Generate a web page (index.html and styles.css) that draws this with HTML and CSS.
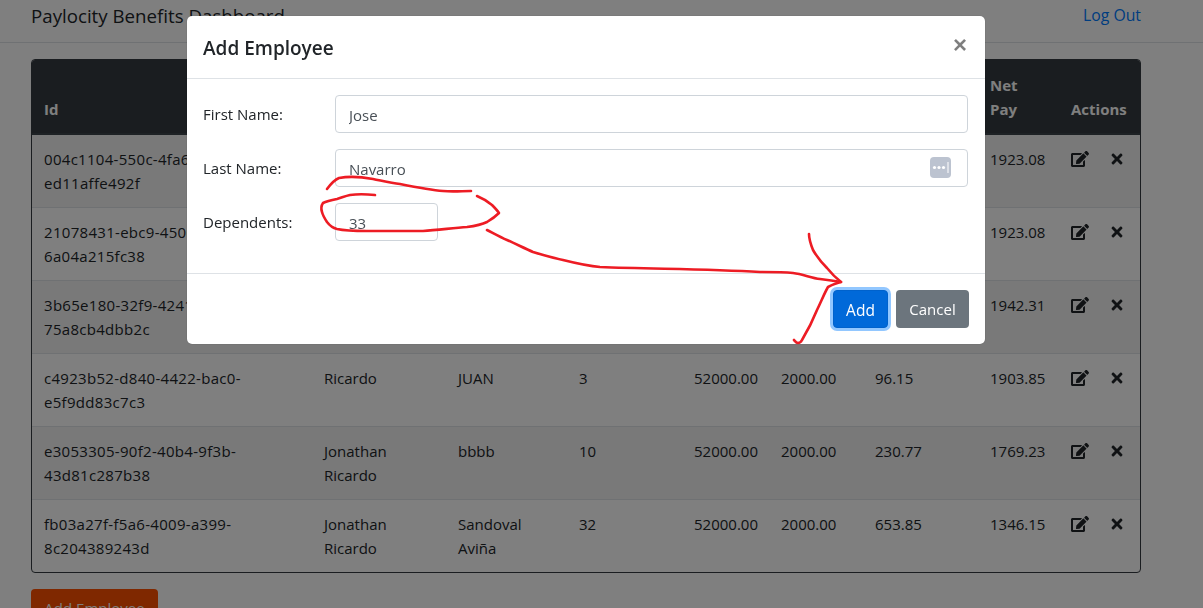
FILE: index.html
```html
<!DOCTYPE html>
<html lang="en">
<head>
    <meta charset="UTF-8">
    <meta name="viewport" content="width=device-width, initial-scale=1.0">
    <title>Paylocity Benefits Dashboard</title>
    <link rel="stylesheet" href="styles.css">
</head>
<body>
    <svg width="0" height="0" class="icon-defs">
        <symbol id="icon-edit" viewBox="0 0 576 512"><path d="M402.6 83.2l90.2 90.2c3.8 3.8 3.8 10 0 13.8L274.4 405.6l-92.8 10.3c-12.4 1.4-22.9-9.1-21.5-21.5l10.3-92.8L388.8 83.2c3.8-3.8 10-3.8 13.8 0zm162-22.9l-48.8-48.8c-15.2-15.2-39.9-15.2-55.2 0l-35.4 35.4c-3.8 3.8-3.8 10 0 13.8l90.2 90.2c3.8 3.8 10 3.8 13.8 0l35.4-35.4c15.2-15.3 15.2-40 0-55.2zM384 346.2V448H64V128h229.8c3.2 0 6.2-1.3 8.5-3.5l40-40c7.6-7.6 2.2-20.5-8.5-20.5H48C21.5 64 0 85.5 0 112v352c0 26.5 21.5 48 48 48h352c26.5 0 48-21.5 48-48V306.2c0-10.7-12.9-16-20.5-8.5l-40 40c-2.2 2.3-3.5 5.3-3.5 8.5z"/></symbol>
        <symbol id="icon-times" viewBox="0 0 352 512"><path d="M242.72 256l100.07-100.07c12.28-12.28 12.28-32.19 0-44.48l-22.24-22.24c-12.28-12.28-32.19-12.28-44.48 0L176 189.28 75.93 89.21c-12.28-12.28-32.19-12.28-44.48 0L9.21 111.45c-12.28 12.28-12.28 32.19 0 44.48L109.28 256 9.21 356.07c-12.28 12.28-12.28 32.19 0 44.48l22.24 22.24c12.28 12.28 32.2 12.28 44.48 0L176 322.72l100.07 100.07c12.28 12.28 32.2 12.28 44.48 0l22.24-22.24c12.28-12.28 12.28-32.19 0-44.48L242.72 256z"/></symbol>
    </svg>

    <header class="navbar">
        <span class="brand">Paylocity Benefits Dashboard</span>
        <a class="logout" href="#">Log Out</a>
    </header>

    <main class="content">
        <div class="table-wrap">
            <table class="employees">
                <colgroup>
                    <col class="col-id"><col class="col-first"><col class="col-last"><col class="col-dep">
                    <col class="col-salary"><col class="col-gross"><col class="col-cost"><col class="col-net"><col class="col-actions">
                </colgroup>
                <thead>
                    <tr>
                        <th>Id</th><th>First Name</th><th>Last Name</th><th>Dependents</th>
                        <th>Salary</th><th>Gross Pay</th><th>Benefits Cost</th><th>Net Pay</th><th>Actions</th>
                    </tr>
                </thead>
                <tbody>
                    <tr>
                        <td class="cell-id">004c1104-550c-4fa6-9a31-ed11affe492f</td><td>Jose</td><td>Navarro</td><td>1</td>
                        <td>52000.00</td><td>2000.00</td><td>76.92</td><td>1923.08</td>
                        <td><div class="actions"><svg class="icon-edit"><use href="#icon-edit"/></svg><svg class="icon-times"><use href="#icon-times"/></svg></div></td>
                    </tr>
                    <tr>
                        <td class="cell-id">21078431-ebc9-4506-b7d2-6a04a215fc38</td><td>Maria</td><td>Lopez</td><td>1</td>
                        <td>52000.00</td><td>2000.00</td><td>76.92</td><td>1923.08</td>
                        <td><div class="actions"><svg class="icon-edit"><use href="#icon-edit"/></svg><svg class="icon-times"><use href="#icon-times"/></svg></div></td>
                    </tr>
                    <tr>
                        <td class="cell-id">3b65e180-32f9-4241-8c60-75a8cb4dbb2c</td><td>Ricardo</td><td>Perez</td><td>0</td>
                        <td>52000.00</td><td>2000.00</td><td>57.69</td><td>1942.31</td>
                        <td><div class="actions"><svg class="icon-edit"><use href="#icon-edit"/></svg><svg class="icon-times"><use href="#icon-times"/></svg></div></td>
                    </tr>
                    <tr>
                        <td class="cell-id">c4923b52-d840-4422-bac0-e5f9dd83c7c3</td><td>Ricardo</td><td>JUAN</td><td>3</td>
                        <td>52000.00</td><td>2000.00</td><td>96.15</td><td>1903.85</td>
                        <td><div class="actions"><svg class="icon-edit"><use href="#icon-edit"/></svg><svg class="icon-times"><use href="#icon-times"/></svg></div></td>
                    </tr>
                    <tr>
                        <td class="cell-id">e3053305-90f2-40b4-9f3b-43d81c287b38</td><td>Jonathan Ricardo</td><td>bbbb</td><td>10</td>
                        <td>52000.00</td><td>2000.00</td><td>230.77</td><td>1769.23</td>
                        <td><div class="actions"><svg class="icon-edit"><use href="#icon-edit"/></svg><svg class="icon-times"><use href="#icon-times"/></svg></div></td>
                    </tr>
                    <tr>
                        <td class="cell-id">fb03a27f-f5a6-4009-a399-8c204389243d</td><td>Jonathan Ricardo</td><td>Sandoval Aviña</td><td>32</td>
                        <td>52000.00</td><td>2000.00</td><td>653.85</td><td>1346.15</td>
                        <td><div class="actions"><svg class="icon-edit"><use href="#icon-edit"/></svg><svg class="icon-times"><use href="#icon-times"/></svg></div></td>
                    </tr>
                </tbody>
            </table>
        </div>
        <button class="btn btn-add-employee" type="button">Add Employee</button>
    </main>

    <div class="backdrop">
        <div class="modal">
            <div class="modal-header">
                <h5 class="modal-title">Add Employee</h5>
                <button class="close" type="button">&times;</button>
            </div>
            <form class="modal-body">
                <div class="form-row">
                    <label for="firstName">First Name:</label>
                    <input class="form-control" id="firstName" type="text" value="Jose">
                </div>
                <div class="form-row">
                    <label for="lastName">Last Name:</label>
                    <div class="input-holder">
                        <input class="form-control" id="lastName" type="text" value="Navarro">
                        <svg class="autofill-icon" viewBox="0 0 21 21">
                            <rect width="21" height="21" rx="4" fill="#bcc3d0"/>
                            <circle cx="4.5" cy="10.5" r="1.6" fill="#fff"/>
                            <circle cx="9" cy="10.5" r="1.6" fill="#fff"/>
                            <circle cx="13.5" cy="10.5" r="1.6" fill="#fff"/>
                            <rect x="17.5" y="5" width="1" height="11" fill="#fff"/>
                        </svg>
                    </div>
                </div>
                <div class="form-row">
                    <label for="dependents">Dependents:</label>
                    <input class="form-control input-small" id="dependents" type="text" value="33">
                </div>
            </form>
            <div class="modal-footer">
                <button class="btn btn-primary" type="button">Add</button>
                <button class="btn btn-secondary" type="button">Cancel</button>
            </div>
        </div>

        <!-- red marker scribbles drawn over the dialog -->
        <svg class="scribble" viewBox="0 0 1203 608">
            <path d="M327 189C330 185 334 180 339 178C350 176 362 177 373 179C383 181 391 183 400 184C415 187 430 190 443 191C453 192 462 191 471 191"/>
            <path d="M375 195C365 194 357 194 350 195C345 196 341 198 337 199C332 200 327 201 323 203C321 206 321 209 322 212C323 216 325 219 327 222C330 226 333 228 337 229C346 231 356 231 367 231C385 231 405 231 423 231C438 230 453 228 467 227C475 226 481 225 487 222C492 219 496 216 499 213C497 210 494 207 492 205C487 201 482 198 477 196"/>
            <path d="M487 230C493 233 500 237 507 240C516 244 524 248 533 252C543 255 553 258 563 260C575 263 588 266 600 267C650 269 705 269 760 272C772 272 783 272 793 273C803 274 811 278 820 279C828 280 835 281 841 282"/>
            <path d="M809 234C809 240 811 245 813 250C817 257 822 263 827 268C831 273 836 278 841 282C836 283 832 285 828 287C824 294 821 302 817 310C813 320 808 330 802 340C801 342 799 343 798 343C796 343 795 341 794 340"/>
        </svg>
    </div>
</body>
</html>
```

FILE: styles.css
```css
html, body {
    height: 100%;
}

body {
    margin: 0;
    overflow: hidden;
    font-family: "Open Sans", "Liberation Sans", sans-serif;
    font-size: 15px;
    line-height: 24px;
    color: #212529;
    background-color: #fff;
}

.icon-defs {
    position: absolute;
}

.navbar {
    display: flex;
    justify-content: space-between;
    align-items: flex-start;
    height: 42px;
    padding: 0 62px 0 31px;
    border-bottom: 1px solid #dee2e6;
}

.brand {
    font-size: 18.7px;
    line-height: 32px;
}

.logout {
    padding-top: 3px;
    font-size: 15.8px;
    color: #007bff;
    text-decoration: none;
}

.content {
    padding: 16px 0 0 31px;
}

.table-wrap {
    width: 1110px;
    box-sizing: border-box;
    border: 1px solid #343a40;
    border-radius: 4px;
    overflow: hidden;
}

.employees {
    width: 100%;
    table-layout: fixed;
    border-collapse: collapse;
}

.col-id { width: 280px; }
.col-first { width: 134px; }
.col-last { width: 121px; }
.col-dep { width: 115px; }
.col-salary { width: 87px; }
.col-gross { width: 94px; }
.col-cost { width: 115px; }
.col-net { width: 81px; }

.employees th {
    padding: 12px;
    text-align: left;
    vertical-align: bottom;
    color: #fff;
    background-color: #343a40;
    border-top: 1px solid #343a40;
    border-bottom: 2px solid #3d444b;
}

.employees td {
    padding: 12px;
    vertical-align: top;
    border-top: 1px solid #dee2e6;
}

.employees .cell-id {
    letter-spacing: 0.3px;
}

.employees tbody tr:first-child td {
    border-top: 0;
}

.employees tbody tr:nth-child(odd) {
    background-color: rgba(0, 0, 0, 0.05);
}

.actions {
    display: flex;
    align-items: center;
    gap: 22px;
    height: 24px;
}

.icon-edit {
    width: 18px;
    height: 16px;
    fill: #212529;
}

.icon-times {
    width: 12px;
    height: 16px;
    fill: #212529;
}

.btn {
    box-sizing: border-box;
    height: 38px;
    padding: 0 12px;
    font-family: inherit;
    font-size: 15px;
    color: #fff;
    border: 1px solid transparent;
    border-radius: 4px;
}

.btn-add-employee {
    width: 127px;
    margin-top: 16px;
    background-color: #ff5000;
}

.backdrop {
    position: fixed;
    top: 0;
    right: 0;
    bottom: 0;
    left: 0;
    padding: 16px 218px 0 187px;
    background-color: rgba(0, 0, 0, 0.5);
}

.modal {
    background-color: #fff;
    border-radius: 5px;
    box-shadow: 0 0 1px rgba(0, 0, 0, 0.4);
}

.modal-header {
    display: flex;
    justify-content: space-between;
    align-items: center;
    height: 62px;
    padding: 0 16px;
    border-bottom: 1px solid #dee2e6;
}

.modal-title {
    margin: 0;
    padding-top: 2px;
    font-size: 19px;
    font-weight: 600;
    line-height: 32px;
}

.close {
    padding: 0 2px 4px 0;
    font-size: 24px;
    font-weight: 700;
    line-height: 1;
    color: #000;
    background: none;
    border: 0;
    opacity: 0.5;
}

.modal-body {
    display: flex;
    flex-direction: column;
    gap: 16px;
    padding: 16px;
}

.form-row {
    display: grid;
    grid-template-columns: 132px 1fr;
    align-items: center;
    padding-right: 1px;
}

.form-row:last-child {
    margin-bottom: 16px;
}

.input-holder {
    position: relative;
}

.form-control {
    display: block;
    width: 100%;
    height: 38px;
    box-sizing: border-box;
    padding: 2px 12px 0 13px;
    font-family: inherit;
    font-size: 15px;
    color: #495057;
    background-color: #fff;
    border: 1px solid #ced4da;
    border-radius: 4px;
}

.input-small {
    width: 103px;
    padding-top: 2px;
}

.autofill-icon {
    position: absolute;
    top: 8px;
    right: 17px;
    width: 21px;
    height: 21px;
}

.modal-footer {
    display: flex;
    justify-content: flex-end;
    gap: 8px;
    padding: 16px;
    border-top: 1px solid #dee2e6;
}

.btn-primary {
    width: 55px;
    padding-top: 1px;
    font-size: 15.5px;
    background-color: #0069d9;
    border-color: #0062cc;
    box-shadow: 0 0 0 3px rgba(38, 143, 255, 0.5);
}

.btn-secondary {
    width: 73px;
    background-color: #6c757d;
}

.scribble {
    position: absolute;
    top: 0;
    left: 0;
    width: 1203px;
    height: 608px;
    fill: none;
    stroke: #ed1c24;
    stroke-width: 2.6;
    stroke-linecap: round;
    stroke-linejoin: round;
}
```
